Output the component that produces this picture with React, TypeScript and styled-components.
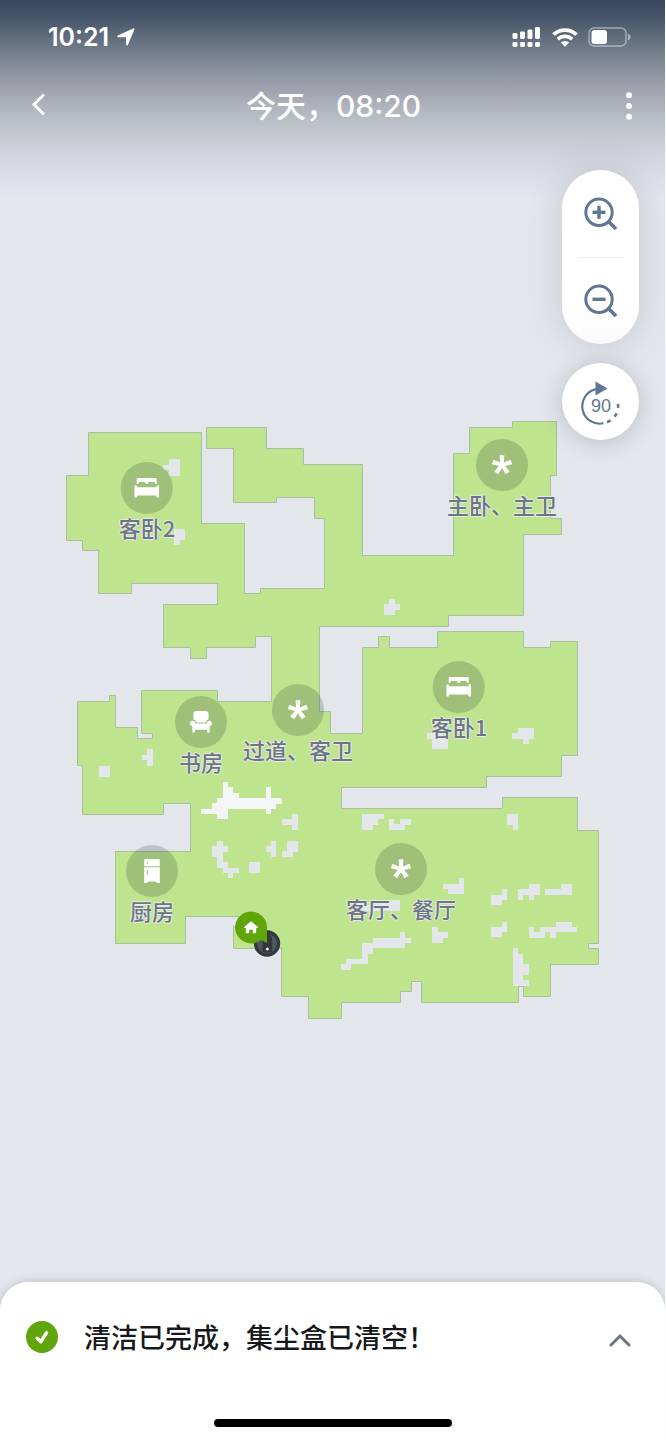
import React from 'react';
import styled, { createGlobalStyle } from 'styled-components';

const GlobalStyle = createGlobalStyle`
  *, *::before, *::after { box-sizing: border-box; }
  body {
    margin: 0;
    background: #fafbfc;
    font-family: Inter, "Noto Sans CJK SC", sans-serif;
  }
  button {
    border: 0;
    padding: 0;
    background: none;
    color: inherit;
    font: inherit;
    cursor: pointer;
  }
  svg { display: block; }
`;

const Page = styled.div`
  display: flex;
  flex-direction: column;
  min-height: 100vh;
  margin-right: 1px;
  overflow: hidden;
  background:
    linear-gradient(
      #38475b 0,
      #49586a 20px,
      #64707f 40px,
      #7d8793 60px,
      #969aa7 80px,
      #a8adb7 100px,
      #b9bfc6 120px,
      #c7cbd2 140px,
      #d4d7df 160px,
      #dde0e8 180px,
      #e3e7ec 200px
    ) top / 100% 200px no-repeat,
    #e3e7ec;
`;

const StatusBar = styled.div`
  display: flex;
  align-items: center;
  justify-content: space-between;
  height: 74px;
  padding: 0 33px 0 48px;
  color: #fff;
`;

const StatusGroup = styled.div<{ $gap: number }>`
  display: flex;
  align-items: center;
  gap: ${(p) => p.$gap}px;
`;

const Clock = styled.time`
  font-size: 25px;
  font-weight: 600;
  line-height: 32px;
`;

const NavBar = styled.header`
  display: grid;
  grid-template-columns: 74px 1fr 72px;
  align-items: center;
  height: 64px;
  color: #fff;
`;

const NavButton = styled.button`
  display: flex;
  align-items: center;
  justify-content: center;
  height: 64px;
`;

const Title = styled.h1`
  margin: 0;
  text-align: center;
  font-size: 30px;
  font-weight: 500;
  line-height: 40px;
`;

const Stage = styled.main`
  position: relative;
  flex: 1;
  display: flex;
  align-items: center;
  padding-top: 20px;
`;

const MapCanvas = styled.div`
  position: relative;
  width: 100%;
`;

const Floor = styled.svg`
  width: 100%;
  height: auto;
`;

const Pin = styled.button`
  position: absolute;
  display: flex;
  flex-direction: column;
  align-items: center;
  transform: translate(-50%, -26px);
`;

const PinDisc = styled.span`
  display: flex;
  align-items: center;
  justify-content: center;
  width: 52px;
  height: 52px;
  border-radius: 50%;
  background: rgba(0, 20, 20, 0.17);
`;

const PinLabel = styled.span`
  font-family: "Noto Sans CJK SC", sans-serif;
  font-size: 22px;
  line-height: 26px;
  white-space: nowrap;
  color: #6c7587;
  font-weight: 500;
  text-shadow: 0 0 1px #f0f3f0, 1px 0 1px #e6ecdf, -1px 0 1px #e6ecdf, 0 1px 1px #e6ecdf, 0 -1px 1px #e6ecdf;
`;

const Controls = styled.div`
  position: absolute;
  top: 32px;
  right: 26px;
  display: flex;
  flex-direction: column;
  gap: 19px;
  color: #5f7694;
`;

const ZoomPill = styled.div`
  display: flex;
  flex-direction: column;
  align-items: center;
  width: 77px;
  border-radius: 39px;
  background: linear-gradient(#fff 75%, #fafafb);
  box-shadow: 0 0 36px rgba(70, 80, 95, 0.2);
`;

const ZoomButton = styled.button`
  display: flex;
  align-items: center;
  justify-content: center;
  width: 77px;
  height: 87px;
`;

const Divider = styled.div`
  width: 46px;
  height: 1px;
  margin-bottom: -1px;
  background: #e8eaee;
`;

const RotateButton = styled.button`
  display: flex;
  align-items: center;
  justify-content: center;
  width: 77px;
  height: 77px;
  border-radius: 50%;
  background: #fff;
  box-shadow: 0 2px 22px rgba(70, 80, 95, 0.28);
`;

const RotateText = styled.text`
  font-family: "Liberation Sans", Arial, sans-serif;
  font-size: 18px;
`;

const Sheet = styled.section`
  position: relative;
  display: flex;
  flex-direction: column;
  align-items: center;
  padding-bottom: 13px;
  border-radius: 28px 28px 0 0;
  background: #fff;
  box-shadow: 0 0 10px rgba(60, 70, 85, 0.25);
`;

const SheetRow = styled.div`
  display: flex;
  align-items: center;
  width: 100%;
  height: 110px;
  padding: 0 25px 0 26px;
`;

const StatusText = styled.p`
  flex: 1;
  margin: 0;
  padding: 4px 0 0 26px;
  font-size: 27px;
  font-weight: 500;
  line-height: 36px;
  color: #17181a;
`;

const ExpandButton = styled.button`
  display: flex;
  align-items: center;
  justify-content: center;
  width: 40px;
  height: 44px;
  padding-top: 6px;
`;

const HomeIndicator = styled.div`
  width: 238px;
  height: 8px;
  margin-top: 27px;
  border-radius: 4px;
  background: #000;
`;

type Kind = 'bed' | 'star' | 'chair' | 'fridge';

const rooms: { name: string; kind: Kind; x: number; y: number }[] = [
  { name: '客卧2', kind: 'bed', x: 147, y: 488 },
  { name: '主卧、主卫', kind: 'star', x: 502, y: 465 },
  { name: '客卧1', kind: 'bed', x: 459, y: 687 },
  { name: '书房', kind: 'chair', x: 201, y: 722 },
  { name: '过道、客卫', kind: 'star', x: 298, y: 710 },
  { name: '厨房', kind: 'fridge', x: 152, y: 871 },
  { name: '客厅、餐厅', kind: 'star', x: 401, y: 869 },
];

const MAP = { top: 400, width: 665, height: 640 };

const outline =
  'M88.5 432.5H201.5V523.5H244.5V593.5H260.5V588.5H324.5V518.5H314.5V497.5H276.5V502.5H233.5V448.5H206.5V427.5H266.5V448.5H303.5V464.5H362.5V555.5H453.5V453.5H469.5V427.5H512.5V421.5H556.5V475.5H550.5V518.5H561.5V534.5H523.5V615.5H448.5V626.5H319.5V711.5H330.5V733.5H362.5V647.5H378.5V636.5H389.5V647.5H437.5V631.5H523.5V647.5H550.5V641.5H577.5V755.5H561.5V776.5H486.5V787.5H341.5V808.5H502.5V797.5H577.5V830.5H598.5V943.5H588.5V948.5H598.5V964.5H550.5V996.5H523.5V986.5H518.5V1002.5H421.5V981.5H411.5V991.5H400.5V1002.5H341.5V1018.5H308.5V996.5H281.5V948.5H233.5V926.5H238.5V916.5H185.5V943.5H115.5V851.5H190.5V803.5H163.5V814.5H82.5V765.5H77.5V701.5H109.5V695.5H115.5V727.5H137.5V738.5H152.5V733.5H141.5V690.5H217.5V701.5H271.5V636.5H255.5V647.5H206.5V658.5H190.5V647.5H163.5V604.5H217.5V583.5H131.5V593.5H98.5V550.5H82.5V540.5H66.5V475.5H88.5Z';

// Obstacles as [left, top, right, bottom]
const obstacles: [number, number, number, number][] = [
  [169, 459, 180, 476], [163, 465, 169, 470],
  [174, 529, 185, 540], [174, 540, 180, 545],
  [389, 599, 395, 605], [384, 604, 400, 610], [384, 610, 395, 615],
  [147, 749, 153, 766], [142, 755, 147, 760], [99, 766, 110, 777],
  [427, 733, 443, 739], [432, 738, 448, 749],
  [518, 728, 534, 739], [512, 733, 518, 739], [523, 738, 529, 744],
  [282, 819, 293, 825], [292, 814, 298, 830],
  [217, 841, 223, 846], [212, 846, 228, 852], [212, 851, 223, 857], [217, 857, 223, 868], [217, 862, 228, 868], [223, 868, 239, 873], [228, 873, 233, 878],
  [271, 841, 276, 857], [266, 846, 271, 852],
  [287, 841, 298, 852], [282, 851, 293, 857], [249, 862, 260, 873],
  [362, 814, 384, 819], [362, 819, 378, 825], [362, 824, 373, 830],
  [389, 819, 394, 830], [400, 819, 411, 825], [389, 824, 405, 830],
  [507, 814, 518, 825], [513, 825, 518, 830],
  [459, 878, 464, 894], [443, 884, 459, 889], [448, 889, 464, 894],
  [502, 889, 507, 900], [491, 895, 502, 905],
  [529, 884, 540, 895], [518, 889, 540, 895], [518, 895, 523, 900], [529, 895, 534, 900],
  [561, 884, 572, 895], [545, 889, 572, 895],
  [373, 900, 400, 911], [362, 905, 373, 911],
  [432, 927, 438, 943], [438, 932, 448, 938], [438, 938, 443, 943],
  [502, 922, 507, 932], [491, 927, 502, 937],
  [556, 922, 572, 927], [529, 927, 534, 938], [534, 932, 545, 938], [540, 927, 577, 932], [550, 932, 556, 938],
  [400, 932, 405, 938], [373, 938, 411, 943], [362, 943, 405, 948], [362, 948, 373, 954], [362, 954, 368, 959], [346, 959, 368, 964], [341, 964, 351, 970],
  [513, 948, 518, 986], [518, 954, 523, 986], [523, 964, 529, 975], [523, 980, 529, 986],
];

const brightPatch: [number, number, number, number][] = [
  [223, 782, 228, 788], [223, 787, 233, 793], [223, 793, 239, 798], [217, 798, 282, 804],
  [212, 803, 276, 809], [201, 809, 228, 814], [217, 814, 228, 819], [266, 787, 271, 814],
];

const toPath = (rects: [number, number, number, number][]) =>
  rects.map(([l, t, r, b]) => `M${l} ${t}H${r}V${b}H${l}Z`).join('');

function RoomIcon({ kind }: { kind: Kind }) {
  if (kind === 'bed') {
    return (
      <svg width="26" height="20" viewBox="0 0 26 20" fill="#fff" aria-hidden="true">
        <path d="M4.200 0h17.600q1.200 0 1.200 1.200V6h-1.400c0-1.400-.9-2-2.200-2h-3.200c-1.300 0-2 .6-2.200 2h-2C11.800 4.600 11.100 4 9.800 4H6.600C5.300 4 4.400 4.600 4.400 6H3V1.200Q3 0 4.200 0Z" />
        <path d="M1.700 7.200C2.700 7.200 3.300 8 3.500 9.200h19C22.700 8 23.300 7.200 24.300 7.200c.7 0 1 .4 1 1.100V19.500H23l-.6-2H3.600L3 19.500H.7V8.300c0-.7.3-1.100 1-1.100Z" />
      </svg>
    );
  }
  if (kind === 'chair') {
    return (
      <svg width="22" height="22" viewBox="0 0 22 22" fill="#fff" aria-hidden="true">
        <path d="M6.300 0h9.400Q18.500 0 18.500 2.800v5.600c-1.700.5-2.700 1.600-2.900 3H6.400c-.2-1.400-1.200-2.500-2.900-3V2.800Q3.500 0 6.300 0Z" />
        <path d="M2.700 9.700c1.600 0 2.700 1.100 2.700 2.800h11.200c0-1.700 1.100-2.800 2.700-2.800 1.500 0 2.700 1.200 2.700 2.700 0 1.400-.9 2.400-2.300 2.800v5.100q0 1.500-1.200 1.500t-1.300-1.500l-.3-1.500H5.100l-.3 1.500q-.1 1.500-1.300 1.500t-1.200-1.500v-5.100C.900 14.800 0 13.800 0 12.400 0 10.900 1.200 9.700 2.700 9.700Z" />
      </svg>
    );
  }
  if (kind === 'fridge') {
    return (
      <svg width="16" height="24" viewBox="0 0 16 24" aria-hidden="true">
        <path fill="#fff" d="M1.500 0h13Q15.800 0 15.800 1.300V7.200H.2V1.300Q.2 0 1.500 0ZM.2 8.300h15.600V24H12.800l-.8-1.500H4L3.200 24H.2Z" />
        <path stroke="#a0be7b" strokeWidth="1" strokeLinecap="round" d="M3.300 3.200V4.800M3.300 11.300v4" />
      </svg>
    );
  }
  return (
    <svg width="22" height="22" viewBox="-11 -11 22 22" fill="#fff" aria-hidden="true">
      {[0, 72, 144, 216, 288].map((deg) => (
        <path key={deg} transform={`rotate(${deg})`} d="M-1.600 1.500L-2.400-9.800H2.400L1.600 1.500Z" />
      ))}
    </svg>
  );
}

function Magnifier({ plus }: { plus?: boolean }) {
  return (
    <svg width="34" height="34" viewBox="0 0 34 34" fill="none" stroke="currentColor" strokeWidth="3" aria-hidden="true">
      <circle cx="15" cy="15.300" r="13.200" />
      <path strokeWidth="3.400" d="M8.500 15.300h13" />
      {plus && <path strokeWidth="3.400" d="M15 8.800v13" />}
      <path strokeWidth="3.800" d="M24 24L32 32" />
    </svg>
  );
}

export default function App() {
  return (
    <>
      <GlobalStyle />
      <Page>
        <StatusBar>
          <StatusGroup $gap={8}>
            <Clock>10:21</Clock>
            <svg width="18" height="18" viewBox="0 0 18 18" fill="#fff" stroke="#fff" strokeLinejoin="round" aria-label="定位">
              <path d="M16.600 1.200L10 16.600V8.300H1.200Z" strokeWidth="1.800" />
            </svg>
          </StatusGroup>
          <StatusGroup $gap={10}>
            <svg width="30" height="20" viewBox="0 0 30 20" fill="#fff" aria-label="信号">
              <rect x="0.500" y="6" width="5" height="6" rx="1.400" />
              <rect x="8" y="4.500" width="5" height="7.500" rx="1.400" />
              <rect x="15.500" y="2.500" width="5" height="9.500" rx="1.400" />
              <rect x="23" y="0" width="5" height="12" rx="1.400" />
              <rect x="0.500" y="15" width="5" height="5" rx="1.400" />
              <rect x="8" y="15" width="5" height="5" rx="1.400" />
              <rect x="15.500" y="15" width="5" height="5" rx="1.400" />
              <rect x="23" y="15" width="5" height="5" rx="1.400" />
            </svg>
            <svg width="26" height="19" viewBox="0 0 26 19" fill="none" stroke="#fff" aria-label="无线网络">
              <path strokeWidth="3.800" d="M1.500 6.700A16.500 16.500 0 0 1 24.500 6.700" />
              <path strokeWidth="3.600" d="M5.800 11.300A10.300 10.300 0 0 1 20.200 11.300" />
              <path fill="#fff" stroke="none" d="M13 18.800L8.800 14.600A6 6 0 0 1 17.200 14.600Z" />
            </svg>
            <svg width="44" height="20" viewBox="0 0 44 20" aria-label="电量">
              <rect x="1" y="1" width="37" height="18" rx="5" fill="none" stroke="#fff" strokeOpacity="0.450" strokeWidth="1.500" />
              <path fill="#fff" fillOpacity="0.500" d="M40 6.500q2.500.8 2.500 3.500T40 13.500Z" />
              <rect x="3.500" y="3" width="15.500" height="14" rx="3" fill="#fff" />
            </svg>
          </StatusGroup>
        </StatusBar>
        <NavBar>
          <NavButton type="button" aria-label="返回">
            <svg width="20" height="26" viewBox="0 0 20 26" fill="none" stroke="#fff" strokeWidth="3" aria-hidden="true">
              <path d="M17 1.500L7 11.500L17 21.500" />
            </svg>
          </NavButton>
          <Title>今天，08:20</Title>
          <NavButton type="button" aria-label="更多">
            <svg width="6" height="28" viewBox="0 0 6 28" fill="#fff" aria-hidden="true">
              <circle cx="3" cy="3.200" r="3" />
              <circle cx="3" cy="14" r="3" />
              <circle cx="3" cy="24.800" r="3" />
            </svg>
          </NavButton>
        </NavBar>
        <Stage>
          <MapCanvas>
            <Floor viewBox={`0 ${MAP.top} ${MAP.width} ${MAP.height}`} aria-label="清洁地图">
              <path d={outline} fill="#bee48e" stroke="#a9bfa2" strokeWidth="1" />
              <path d={toPath(obstacles)} fill="#e3e7ec" />
              <path d={toPath(brightPatch)} fill="#f3f5f7" />
              <circle cx="267" cy="943.500" r="13.200" fill="#33383f" />
              <circle cx="267" cy="943.500" r="10" fill="#4e5660" />
              <path fill="#33383f" d="M262.500 938.500a4.800 4.800 0 0 1 9.600 0V951.500q-4.800 2.500-9.600 0Z" />
              <circle cx="267.300" cy="949" r="1.500" fill="#e8ebee" />
              <path fill="#60a509" d="M251 911.500a16 16 0 0 1 16 16V943q-3-1.300-6-2.900A16 16 0 1 1 251 911.500Z" />
              <path fill="#fff" d="M251 921.200l6.800 5.900q.5.900-.4.900h-1.200v4.400q0 .8-.8.800h-2.600v-3.400h-3.600v3.400h-2.600q-.8 0-.8-.8V928h-1.200q-.9 0-.4-.9Z" />
            </Floor>
            {rooms.map((room) => (
              <Pin
                key={room.name}
                type="button"
                style={{
                  left: `${(room.x / MAP.width) * 100}%`,
                  top: `${((room.y - MAP.top) / MAP.height) * 100}%`,
                }}
              >
                <PinDisc>
                  <RoomIcon kind={room.kind} />
                </PinDisc>
                <PinLabel>{room.name}</PinLabel>
              </Pin>
            ))}
          </MapCanvas>
          <Controls>
            <ZoomPill>
              <ZoomButton type="button" aria-label="放大">
                <Magnifier plus />
              </ZoomButton>
              <Divider />
              <ZoomButton type="button" aria-label="缩小">
                <Magnifier />
              </ZoomButton>
            </ZoomPill>
            <RotateButton type="button" aria-label="旋转90度">
              <svg width="42" height="46" viewBox="0 0 42 46" aria-hidden="true">
                <path d="M16 10.100A17.500 17.500 0 0 0 23.500 44.300" fill="none" stroke="currentColor" strokeWidth="2.200" />
                <path d="M27 43.300A17.500 17.500 0 0 0 38 25" fill="none" stroke="currentColor" strokeWidth="2.600" strokeDasharray="4 5.500" />
                <path d="M15.500 2.500L27.500 9.500L15.500 16.500Z" fill="currentColor" />
                <RotateText x="21" y="33" textAnchor="middle" fill="currentColor">90</RotateText>
              </svg>
            </RotateButton>
          </Controls>
        </Stage>
        <Sheet>
          <SheetRow>
            <svg width="32" height="32" viewBox="0 0 32 32" aria-hidden="true">
              <circle cx="16" cy="16" r="16" fill="#60a50c" />
              <path d="M11.200 17.200L14.800 20.800L20.600 11.700" fill="none" stroke="#fff" strokeWidth="3.400" strokeLinecap="round" strokeLinejoin="round" />
            </svg>
            <StatusText>清洁已完成，集尘盒已清空！</StatusText>
            <ExpandButton type="button" aria-label="展开">
              <svg width="22" height="14" viewBox="0 0 22 14" fill="none" stroke="#6d7783" strokeWidth="3" strokeLinecap="round" aria-hidden="true">
                <path d="M2 12L11 3L20 12" />
              </svg>
            </ExpandButton>
          </SheetRow>
          <HomeIndicator />
        </Sheet>
      </Page>
    </>
  );
}
